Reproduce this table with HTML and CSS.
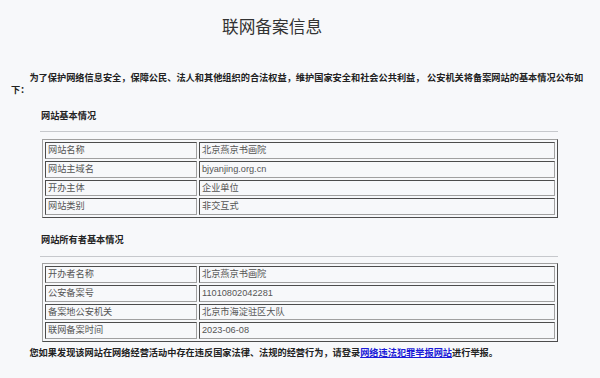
FILE: index.html
```html
<!DOCTYPE html>
<html lang="zh-CN">
<head>
<meta charset="utf-8">
<title>联网备案信息</title>
<link rel="stylesheet" href="styles.css">
</head>
<body>
<div class="page">
  <h1 class="title">联网备案信息</h1>
  <p class="intro">为了保护网络信息安全，保障公民、法人和其他组织的合法权益，维护国家安全和社会公共利益， 公安机关将备案网站的基本情况公布如下：</p>

  <div class="section">
    <h2 class="sec-title">网站基本情况</h2>
    <hr class="rule">
    <table class="info">
      <tr><td class="k">网站名称</td><td class="v">北京燕京书画院</td></tr>
      <tr><td class="k">网站主域名</td><td class="v">bjyanjing.org.cn</td></tr>
      <tr><td class="k">开办主体</td><td class="v">企业单位</td></tr>
      <tr><td class="k">网站类别</td><td class="v">非交互式</td></tr>
    </table>
  </div>

  <div class="section second">
    <h2 class="sec-title">网站所有者基本情况</h2>
    <hr class="rule rule2">
    <table class="info info2">
      <tr><td class="k">开办者名称</td><td class="v">北京燕京书画院</td></tr>
      <tr><td class="k">公安备案号</td><td class="v">11010802042281</td></tr>
      <tr><td class="k">备案地公安机关</td><td class="v">北京市海淀驻区大队</td></tr>
      <tr><td class="k">联网备案时间</td><td class="v">2023-06-08</td></tr>
    </table>
  </div>

  <p class="footer">您如果发现该网站在网络经营活动中存在违反国家法律、法规的经营行为，请登录<a class="link" href="#">网络违法犯罪举报网站</a>进行举报。</p>
</div>
</body>
</html>
```

FILE: styles.css
```css
html, body {
  margin: 0;
  padding: 0;
  background: #f7f8fa;
}
body {
  font-family: "Liberation Sans", "Noto Sans CJK SC", sans-serif;
  font-size: 9.2px;
  color: #222;
}
.page {
  padding: 0 8px 0 11px;
}
.title {
  margin: 18px 0 0 0;
  padding-left: 211px;
  font-size: 16.7px;
  line-height: 20px;
  font-weight: normal;
  color: #333;
}
.intro {
  margin: 34px 0 0 0;
  font-weight: bold;
  line-height: 12px;
  text-indent: 2em;
}
.section {
  margin: 14px 0 0 29px;
  width: 518px;
}
.section.second {
  margin-top: 16px;
}
.sec-title {
  margin: 0;
  padding-left: 1px;
  font-size: 9.2px;
  line-height: 12px;
  font-weight: bold;
}
.rule {
  margin: 9px 0 0 0;
  border: 0;
  border-top: 1px solid #c6c8cc;
  height: 0;
}
.rule2 {
  margin-top: 10px;
}
.info {
  margin: 7px 0 0 2px;
  width: 516px;
  border: 1px outset #a0a0a0;
  border-spacing: 2px;
  table-layout: fixed;
}
.info2 {
  margin-top: 6px;
}
.info td {
  border: 1px inset #a0a0a0;
  padding: 0 2px;
  line-height: 14.75px;
  color: #555;
  white-space: nowrap;
}
.info td.k {
  width: 146px;
}
.footer {
  margin: 5px 0 0 0;
  font-weight: bold;
  line-height: 12px;
  text-indent: 2em;
}
.link {
  color: #1a1ad8;
  text-decoration: underline;
}
```
